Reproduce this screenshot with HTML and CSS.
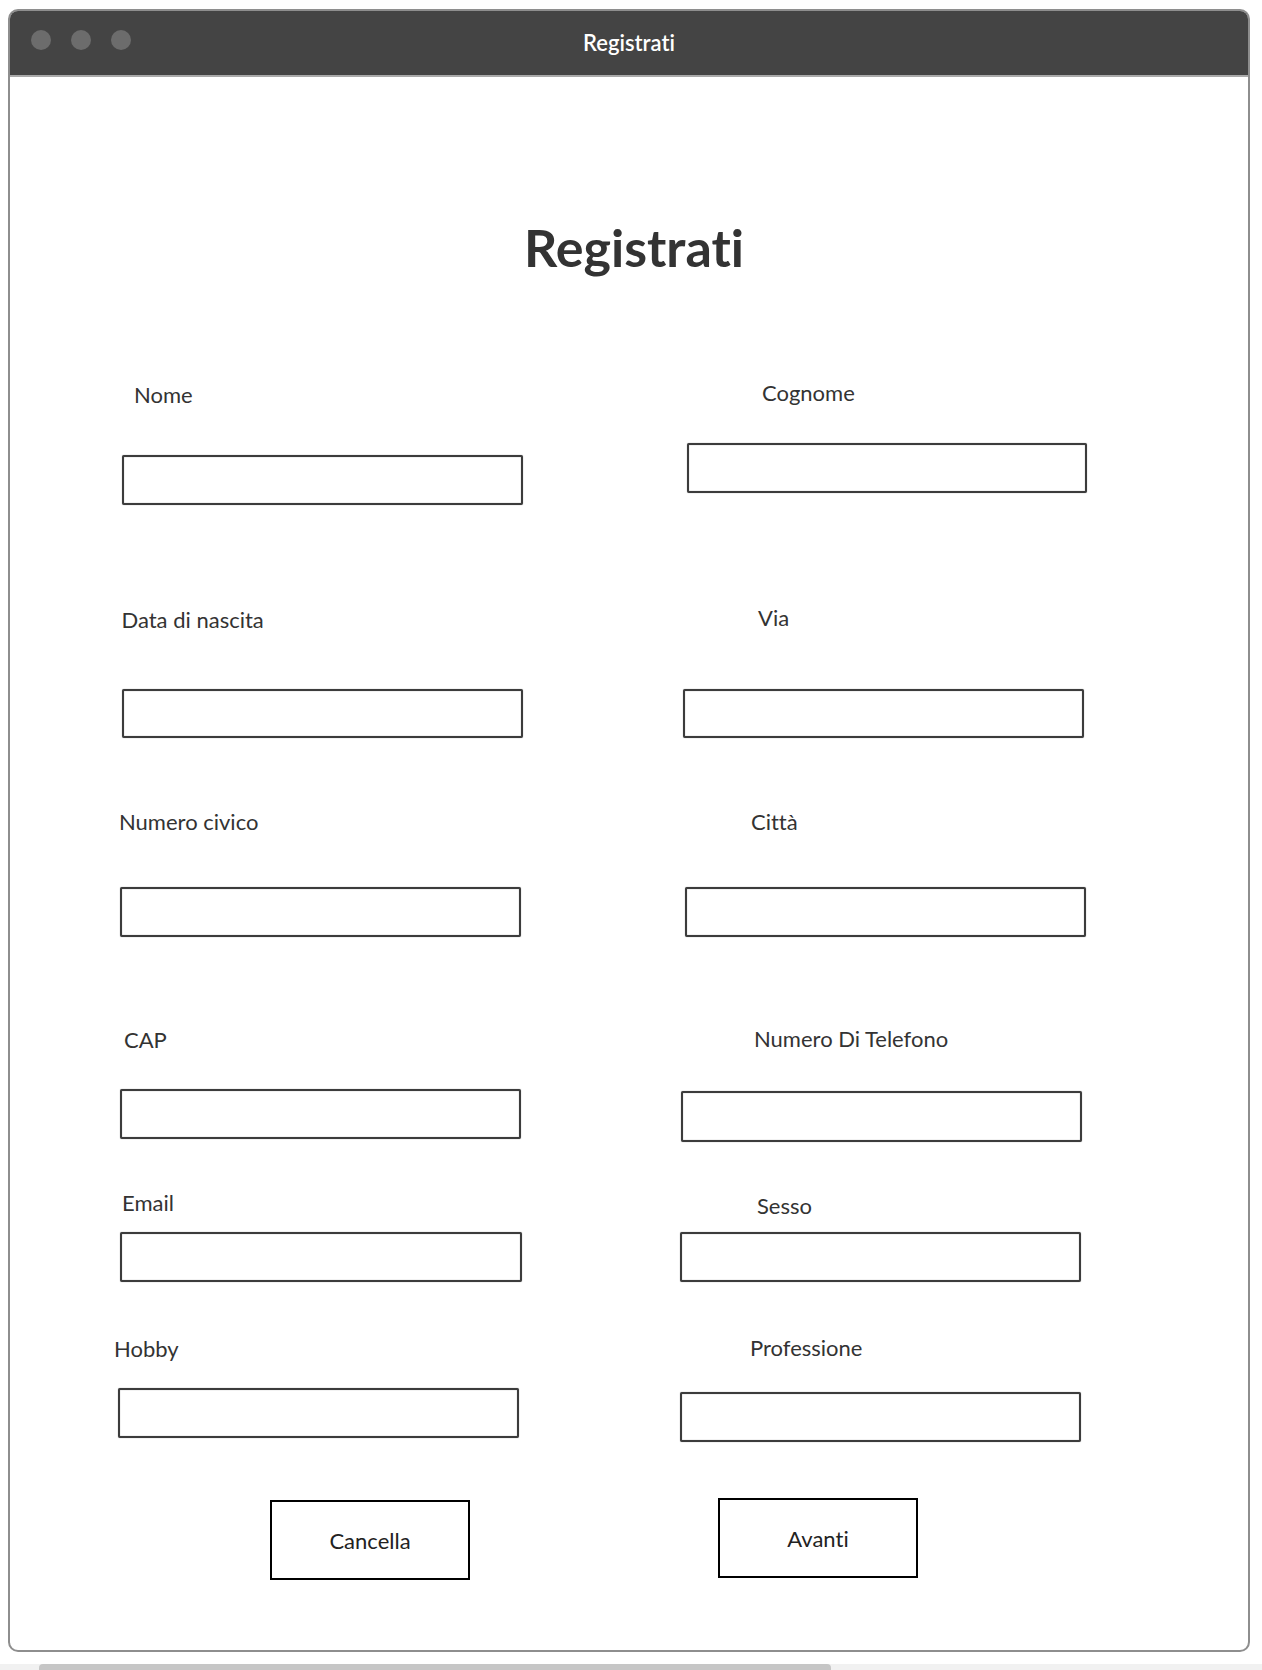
FILE: index.html
```html
<!DOCTYPE html>
<html lang="it">
<head>
<meta charset="utf-8">
<title>Registrati</title>
<link rel="stylesheet" href="styles.css">
</head>
<body>
<div class="window">
  <div class="titlebar">
    <div class="dots"><span class="dot"></span><span class="dot"></span><span class="dot"></span></div>
    <div class="title">Registrati</div>
  </div>
  <div class="content">
    <h1 class="heading">Registrati</h1>
    <div class="form">
      <div class="col col-left">
        <div class="field f-nome"><div class="label">Nome</div><div class="input"></div></div>
        <div class="field f-data"><div class="label">Data di nascita</div><div class="input"></div></div>
        <div class="field f-civico"><div class="label">Numero civico</div><div class="input"></div></div>
        <div class="field f-cap"><div class="label">CAP</div><div class="input"></div></div>
        <div class="field f-email"><div class="label">Email</div><div class="input"></div></div>
        <div class="field f-hobby"><div class="label">Hobby</div><div class="input"></div></div>
      </div>
      <div class="col col-right">
        <div class="field f-cognome"><div class="label">Cognome</div><div class="input"></div></div>
        <div class="field f-via"><div class="label">Via</div><div class="input"></div></div>
        <div class="field f-citta"><div class="label">Città</div><div class="input"></div></div>
        <div class="field f-tel"><div class="label">Numero Di Telefono</div><div class="input"></div></div>
        <div class="field f-sesso"><div class="label">Sesso</div><div class="input"></div></div>
        <div class="field f-prof"><div class="label">Professione</div><div class="input"></div></div>
      </div>
    </div>
    <div class="buttons">
      <div class="btn btn-cancel">Cancella</div>
      <div class="btn btn-next">Avanti</div>
    </div>
  </div>
</div>
<div class="scrolltrack"><div class="thumb"></div></div>
</body>
</html>
```
FILE: styles.css
```css
html, body {
  margin: 0;
  padding: 0;
  background: #ffffff;
}
body {
  width: 1262px;
  height: 1670px;
  overflow: hidden;
  font-family: "Lato", "Liberation Sans", sans-serif;
  font-variant-ligatures: none;
  font-feature-settings: "liga" 0, "clig" 0;
  color: #333333;
}
.window {
  box-sizing: border-box;
  width: 1242px;
  height: 1643px;
  margin: 9px 0 0 8px;
  border: 2px solid #8e8e8e;
  border-radius: 10px;
  overflow: hidden;
  background: #ffffff;
}
.titlebar {
  position: relative;
  height: 64px;
  background: #444444;
  border-bottom: 2px solid #a9a9a9;
  display: flex;
  align-items: center;
  justify-content: center;
}
.dots {
  position: absolute;
  left: 21px;
  top: 19px;
  display: flex;
  gap: 20px;
}
.dot {
  width: 20px;
  height: 20px;
  border-radius: 50%;
  background: #6c6c6c;
}
.title {
  color: #ffffff;
  font-size: 22px;
  font-weight: 600;
  line-height: 26px;
}
.content {
  display: flex;
  flex-direction: column;
}
.heading {
  margin: 139px 0 0 0;
  padding-left: 10px;
  text-align: center;
  font-size: 52px;
  line-height: 62px;
  font-weight: 700;
  color: #333333;
}
.form {
  display: flex;
  margin-top: 92px;
  padding-left: 105px;
}
.col {
  display: flex;
  flex-direction: column;
}
.col-left {
  width: 565px;
}
.label {
  font-size: 22px;
  line-height: 26px;
  color: #333333;
  white-space: nowrap;
}
.input {
  box-sizing: border-box;
  width: 401px;
  height: 50px;
  border: 2px solid #3c3c3c;
  border-radius: 2px;
  box-shadow: 0 0 1px #777777, inset 0 0 1px #777777;
  background: #ffffff;
}

/* left column */
.f-nome .label { margin: 11.5px 0 0 19px; }
.f-nome .input { margin: 47.5px 0 0 7px; }
.f-data { margin-top: 101.5px; }
.f-data .label { margin-left: 6.5px; }
.f-data .input { margin: 56.5px 0 0 7px; height: 49px; }
.f-civico { margin-top: 70.5px; }
.f-civico .label { margin-left: 4px; }
.f-civico .input { margin: 52.5px 0 0 5px; }
.f-cap { margin-top: 89.5px; }
.f-cap .label { margin-left: 9px; }
.f-cap .input { margin: 36.5px 0 0 5px; }
.f-email { margin-top: 50.5px; }
.f-email .label { margin-left: 7px; }
.f-email .input { margin: 16.5px 0 0 5px; width: 402px; }
.f-hobby { margin-top: 53.5px; }
.f-hobby .label { margin-left: -1px; }
.f-hobby .input { margin: 26.5px 0 0 3px; }

/* right column */
.f-cognome .label { margin: 9.5px 0 0 82px; }
.f-cognome .input { margin: 37.5px 0 0 7px; width: 400px; }
.f-via { margin-top: 111.5px; }
.f-via .label { margin-left: 78px; }
.f-via .input { margin: 58.5px 0 0 3px; height: 49px; }
.f-citta { margin-top: 70.5px; }
.f-citta .label { margin-left: 71px; }
.f-citta .input { margin: 52.5px 0 0 5px; }
.f-tel { margin-top: 88.5px; }
.f-tel .label { margin-left: 74px; }
.f-tel .input { margin: 39.5px 0 0 1px; height: 51px; }
.f-sesso { margin-top: 50.5px; }
.f-sesso .label { margin-left: 77px; }
.f-sesso .input { margin: 13.5px 0 0 0; }
.f-prof { margin-top: 52.5px; }
.f-prof .label { margin-left: 70px; }
.f-prof .input { margin: 31.5px 0 0 0; }

.buttons {
  display: flex;
  align-items: flex-start;
  gap: 248px;
  margin-top: 56px;
  padding-left: 260px;
}
.btn {
  box-sizing: border-box;
  width: 200px;
  height: 80px;
  border: 2px solid #000000;
  display: flex;
  align-items: center;
  justify-content: center;
  font-size: 22px;
  color: #222222;
  background: #ffffff;
}
.btn-cancel {
  margin-top: 2px;
}
.scrolltrack {
  margin-top: 12px;
  height: 6px;
  background: #f1f1f1;
}
.thumb {
  margin-left: 39px;
  width: 792px;
  height: 6px;
  border-radius: 4px 4px 0 0;
  background: #c6c6c6;
}
```
